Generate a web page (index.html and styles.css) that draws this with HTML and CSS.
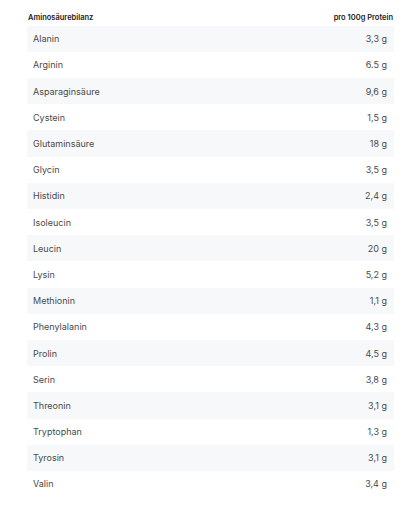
FILE: index.html
```html
<!DOCTYPE html>
<html lang="de">
<head>
<meta charset="utf-8">
<link rel="stylesheet" href="styles.css">
</head>
<body>
<div class="wrap">
  <div class="head">
    <span>Aminosäurebilanz</span>
    <span>pro 100g Protein</span>
  </div>
  <div class="rows">
    <div class="row"><span>Alanin</span><span>3,3 g</span></div>
    <div class="row"><span>Arginin</span><span>6.5 g</span></div>
    <div class="row"><span>Asparaginsäure</span><span>9,6 g</span></div>
    <div class="row"><span>Cystein</span><span>1,5 g</span></div>
    <div class="row"><span>Glutaminsäure</span><span>18 g</span></div>
    <div class="row"><span>Glycin</span><span>3,5 g</span></div>
    <div class="row"><span>Histidin</span><span>2,4 g</span></div>
    <div class="row"><span>Isoleucin</span><span>3,5 g</span></div>
    <div class="row"><span>Leucin</span><span>20 g</span></div>
    <div class="row"><span>Lysin</span><span>5,2 g</span></div>
    <div class="row"><span>Methionin</span><span>1,1 g</span></div>
    <div class="row"><span>Phenylalanin</span><span>4,3 g</span></div>
    <div class="row"><span>Prolin</span><span>4,5 g</span></div>
    <div class="row"><span>Serin</span><span>3,8 g</span></div>
    <div class="row"><span>Threonin</span><span>3,1 g</span></div>
    <div class="row"><span>Tryptophan</span><span>1,3 g</span></div>
    <div class="row"><span>Tyrosin</span><span>3,1 g</span></div>
    <div class="row"><span>Valin</span><span>3,4 g</span></div>
  </div>
</div>
</body>
</html>
```
FILE: styles.css
```css
html, body {
  margin: 0;
  padding: 0;
  background: #ffffff;
}
.wrap {
  width: 367px;
  margin-left: 27px;
  padding-top: 12px;
  font-family: "Inter", "Noto Sans", sans-serif;
  color: #2b2b2b;
}
.head {
  display: flex;
  justify-content: space-between;
  font-size: 7.5px;
  font-weight: 600;
  color: #1a1a1a;
  height: 13.7px;
  line-height: 11px;
  padding: 0 1px;
}
.row {
  display: flex;
  justify-content: space-between;
  align-items: center;
  height: 26.2px;
  padding: 0 7px 0 6px;
  font-size: 9px;
  color: #4a4a4a;
}
.row:nth-child(odd) {
  background: #f7f8f9;
}
```
